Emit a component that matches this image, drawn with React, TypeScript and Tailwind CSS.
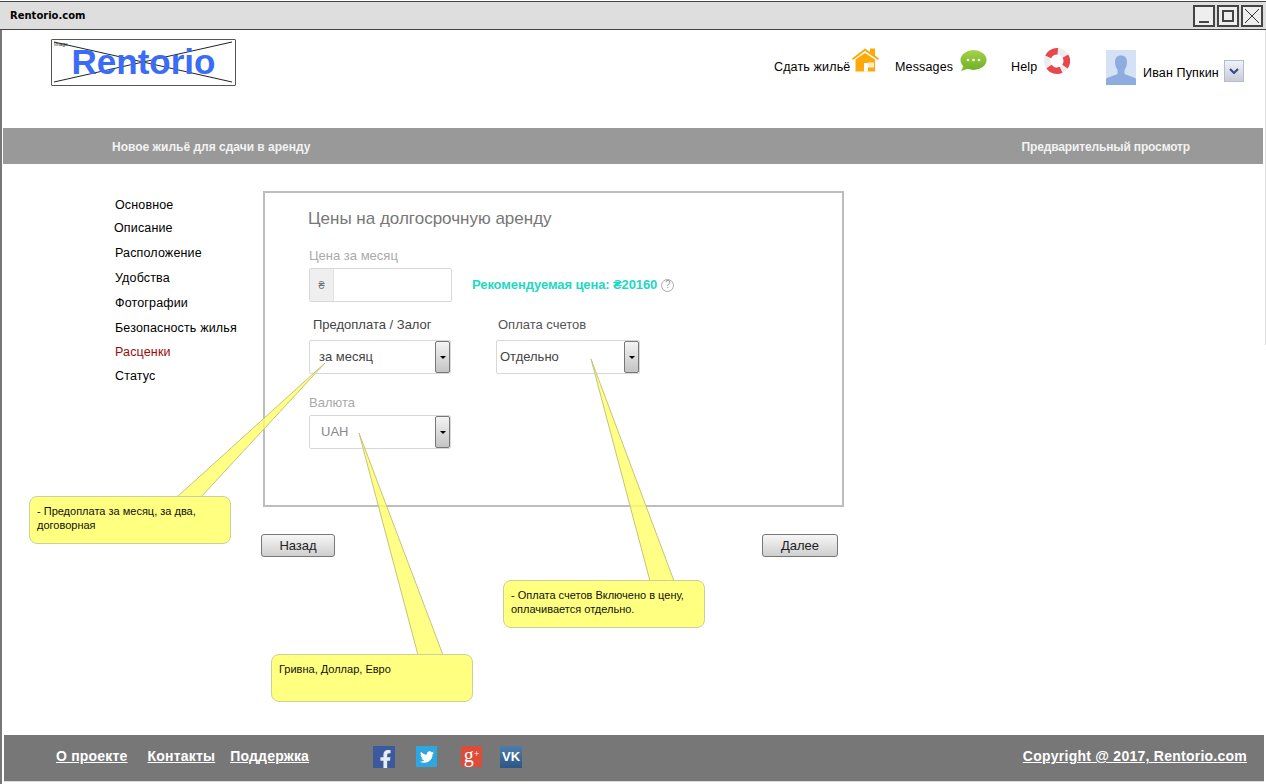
import { FaFacebookF, FaTwitter } from "react-icons/fa";

const navItems = ["Основное", "Описание", "Расположение", "Удобства", "Фотографии", "Безопасность жилья", "Расценки", "Статус"];
const navOffsets = ["mt-0", "mt-[9px]", "mt-[11px]", "mt-[11px]", "mt-[11px]", "mt-[11px]", "mt-[10px]", "mt-[10px]"];

function WindowButton({ children }: { children: React.ReactNode }) {
    return <div className="w-[22px] h-[22px] border-2 border-[#444] bg-[#eee] flex items-center justify-center">{children}</div>;
}

function HouseIcon() {
    return (
        <svg width="27" height="25" viewBox="0 0 27 25">
            <path d="M0 10.5 L13 0.5 L18 4 V0.5 H23 V7.5 L27 10.5 L26 12 L13 3 L1 12 Z" fill="#fda90a" />
            <path d="M3.5 11.5 L13 5 L23 11.5 V23.5 H3.5 Z" fill="#fda90a" />
            <rect x="12" y="15" width="4" height="8.5" fill="#fff" />
            <rect x="16" y="14.5" width="6" height="5" fill="#ffeec8" />
        </svg>
    );
}

function ChatIcon() {
    return (
        <svg width="27" height="22" viewBox="0 0 27 22">
            <defs>
                <linearGradient id="chat" x1="0" y1="0" x2="0" y2="1">
                    <stop offset="0" stopColor="#a4d34a" />
                    <stop offset="1" stopColor="#6fb024" />
                </linearGradient>
            </defs>
            <ellipse cx="13.5" cy="10" rx="13" ry="10" fill="url(#chat)" />
            <path d="M4 15 L1 21 L10 18 Z" fill="#7cb82c" />
            <circle cx="8" cy="10" r="1.3" fill="#fff" />
            <circle cx="13.5" cy="10" r="1.3" fill="#fff" />
            <circle cx="19" cy="10" r="1.3" fill="#fff" />
        </svg>
    );
}

function BuoyIcon() {
    return (
        <svg width="26" height="26" viewBox="0 0 26 26">
            <circle cx="13" cy="13" r="9.75" fill="none" stroke="#ececec" strokeWidth="6.5" />
            <path d="M4.2 8.9 A9.75 9.75 0 0 1 13.8 3.3" fill="none" stroke="#e8474c" strokeWidth="6.5" />
            <path d="M21.4 8.1 A9.75 9.75 0 0 1 21 18.6" fill="none" stroke="#e8474c" strokeWidth="6.5" />
            <path d="M17.1 21.8 A9.75 9.75 0 0 1 5 18.6" fill="none" stroke="#e8474c" strokeWidth="6.5" />
        </svg>
    );
}

function AvatarIcon() {
    return (
        <svg width="30" height="35" viewBox="0 0 30 35" className="block">
            <rect width="30" height="35" fill="#d5e2f5" />
            <path d="M15 5.5 C11 5.5 9 8 9 12 C9 15 10 18 11.5 20 V24 L1 28 L0 29 V35 H30 V29 L29 28 L18.5 24 V20 C20 18 21 15 21 12 C21 8 19 5.5 15 5.5 Z" fill="#8dade0" />
        </svg>
    );
}

function SelectBox({ value, wide, muted }: { value: string; wide?: boolean; muted?: boolean }) {
    return (
        <div className={`${wide ? "w-[144px]" : "w-[142px]"} h-[34px] flex bg-white border border-[#d8d8d8] rounded-[2px]`}>
            <div className={`flex-1 flex items-center text-[13px] ${wide ? "pl-[3px] text-[#444]" : muted ? "pl-[11px] text-[#888]" : "pl-[9px] text-[#444]"}`}>{value}</div>
            <div className="w-[15px] flex items-center justify-center bg-gradient-to-b from-[#f4f4f4] to-[#c4c4c4] border border-[#777] rounded-[2px]">
                <span className="w-0 h-0 border-x-[3px] border-x-transparent border-t-[3px] border-t-black"></span>
            </div>
        </div>
    );
}

function NavButton({ label, className }: { label: string; className: string }) {
    return (
        <div className={`h-[23px] flex items-center justify-center text-[13px] text-[#222] bg-gradient-to-b from-[#f6f6f6] to-[#cfcfcf] border border-[#777] rounded-[3px] ${className}`}>
            {label}
        </div>
    );
}

function Callout({ className, lines }: { className: string; lines: string[] }) {
    return (
        <div className={`absolute w-[202px] h-[48px] pl-[7px] pt-[7px] bg-[#ffff80] border border-[#cfcf9c] rounded-[8px] text-[11px] leading-[14px] text-[#111] ${className}`}>
            {lines.map((line) => (
                <div key={line}>{line}</div>
            ))}
        </div>
    );
}

export default function App() {
    return (
        <div className="relative w-[1266px] h-[784px] overflow-hidden bg-white flex flex-col font-['Liberation_Sans',Arial,sans-serif]">
            {/* window chrome */}
            <div className="h-[29px] mt-[1px] shrink-0 flex items-center justify-between bg-[#dedede] border-t border-b border-[#444] pl-[10px] pr-[3px]">
                <span className="text-[10px] font-['DejaVu_Sans',sans-serif] font-bold text-black">Rentorio.com</span>
                <div className="flex gap-[2px]">
                    <WindowButton><span className="w-[10px] h-[2px] bg-[#444] mt-[12px]"></span></WindowButton>
                    <WindowButton><span className="w-[12px] h-[12px] border-2 border-[#444]"></span></WindowButton>
                    <WindowButton>
                        <svg width="16" height="16" viewBox="0 0 16 16"><path d="M1 1 L15 15 M15 1 L1 15" stroke="#333" strokeWidth="1" /></svg>
                    </WindowButton>
                </div>
            </div>

            <div className="flex-1 flex flex-col border-l-2 border-[#777]">
                {/* header */}
                <div className="h-[98px] shrink-0 flex items-start text-[12.5px] tracking-[0.15px] text-black">
                    <div className="relative w-[185px] h-[47px] ml-[49px] mt-[9px] pb-[3px] border border-[#555] rounded-[1px] flex items-center justify-center">
                        <svg className="absolute inset-0" width="183" height="45" viewBox="0 0 183 45">
                            <path d="M2 42 L180 2 M2 2 L180 42" stroke="#222" strokeWidth="1" />
                        </svg>
                        <span className="absolute left-[2px] top-[1px] text-[5px] leading-[6px] tracking-normal text-[#222]">Image</span>
                        <span className="relative text-[35px] leading-none font-bold tracking-normal text-[#3b6cf5]">Rentorio</span>
                    </div>
                    <div className="ml-[538px] mt-[28px] w-[78px]">Сдать жильё</div>
                    <div className="mt-[18px]"><HouseIcon /></div>
                    <div className="ml-[16px] mt-[28px] w-[65px]">Messages</div>
                    <div className="mt-[20px]"><ChatIcon /></div>
                    <div className="ml-[24px] mt-[28px] w-[33px]">Help</div>
                    <div className="mt-[18px]"><BuoyIcon /></div>
                    <div className="ml-[36px] mt-[20px]"><AvatarIcon /></div>
                    <div className="ml-[7px] mt-[34px] w-[81px]">Иван Пупкин</div>
                    <div className="mt-[30px] w-[20px] h-[22px] flex items-center justify-center bg-gradient-to-b from-[#f0f2f8] to-[#c8ccd8] border border-[#b4bcd2]">
                        <svg width="10" height="6" viewBox="0 0 10 6"><path d="M1 1 L5 5 L9 1" fill="none" stroke="#2e4a86" strokeWidth="2" /></svg>
                    </div>
                </div>

                {/* title bar */}
                <div className="h-[36px] shrink-0 mr-[3px] ml-[1px] pt-[2px] bg-[#999] flex items-center justify-between pl-[109px] pr-[73px] text-[12px] font-bold text-[#f2f2f2]">
                    <span>Новое жильё для сдачи в аренду</span>
                    <span className="tracking-[-0.15px]">Предварительный просмотр</span>
                </div>

                {/* main */}
                <div className="flex-1 flex items-start text-[12px]">
                    <div className="w-[261px] pl-[113px] pt-[34px] text-[12.5px] tracking-[0.15px] text-black">
                        {navItems.map((item, i) => (
                            <div key={item} className={`leading-[14px] ${navOffsets[i]} ${item === "Расценки" ? "text-[#9b0a0a]" : ""} ${item === "Описание" ? "-ml-px" : ""}`}>
                                {item}
                            </div>
                        ))}
                    </div>
                    <div className="w-[581px] pt-[27px]">
                        <div className="h-[316px] border-2 border-[#bdbdbd] pl-[44px] pt-[16px]">
                            <div className="-ml-px text-[17px] leading-[19px] text-[#777]">Цены на долгосрочную аренду</div>
                            <div className="mt-[20px] text-[13px] leading-[15px] text-[#aaa]">Цена за месяц</div>
                            <div className="mt-[5px] flex items-center">
                                <div className="w-[143px] h-[34px] flex bg-white border border-[#d8d8d8] rounded-[2px]">
                                    <div className="w-[24px] flex items-center justify-center bg-[#eeefee] border-r border-[#e2e2e2] text-[11px] text-[#777]">₴</div>
                                </div>
                                <div className="ml-[20px] text-[13px] tracking-[-0.1px] font-bold text-[#1ed8c2]">Рекомендуемая цена: ₴20160</div>
                                <div className="ml-[4px] w-[13px] h-[13px] rounded-full border border-[#aaa] flex items-center justify-center text-[10px] leading-none text-[#999]">?</div>
                            </div>
                            <div className="mt-[15px] flex">
                                <div className="w-[187px]">
                                    <div className="ml-[4px] text-[13px] leading-[15px] text-[#444]">Предоплата / Залог</div>
                                    <div className="mt-[8px]"><SelectBox value="за месяц" /></div>
                                </div>
                                <div>
                                    <div className="ml-[2px] text-[13px] leading-[15px] text-[#555]">Оплата счетов</div>
                                    <div className="mt-[8px]"><SelectBox value="Отдельно" wide /></div>
                                </div>
                            </div>
                            <div className="mt-[21px] text-[13px] leading-[15px] text-[#aaa]">Валюта</div>
                            <div className="mt-[5px]"><SelectBox value="UAH" muted /></div>
                        </div>
                        <div className="mt-[27px] flex justify-between -ml-[2px] pr-[6px]">
                            <NavButton label="Назад" className="w-[74px]" />
                            <NavButton label="Далее" className="w-[76px]" />
                        </div>
                    </div>
                </div>

                {/* footer */}
                <div className="h-[47px] mb-[2px] mr-[2px] shrink-0 ml-[2px] pb-[3px] bg-[#777] border-b border-[#ddd] flex items-center text-[14px] font-bold tracking-[0.2px] text-white">
                    <a className="ml-[52px] underline">О проекте</a>
                    <a className="ml-[20px] underline">Контакты</a>
                    <a className="ml-[15px] underline">Поддержка</a>
                    <div className="ml-[64px] w-[22px] h-[22px] bg-[#3b5a9e] flex items-end justify-center overflow-hidden text-[#e8ecf5]"><FaFacebookF size={19} className="ml-[3px] -mb-[1px]" /></div>
                    <div className="ml-[21px] w-[21px] h-[21px] bg-[#2ea7e0] flex items-center justify-center"><FaTwitter size={14} /></div>
                    <div className="ml-[24px] w-[21px] h-[21px] bg-[#dd4b39] flex items-center justify-center font-normal font-['Liberation_Serif',serif] tracking-normal">
                        <span className="text-[20px] leading-[18px] -mt-[3px]">g</span>
                        <span className="text-[10px] leading-none -mt-[6px]">+</span>
                    </div>
                    <div className="ml-[18px] w-[22px] h-[22px] bg-gradient-to-b from-[#4d7dac] to-[#2c5685] flex items-center justify-center text-[13px] leading-none tracking-normal">VK</div>
                    <a className="ml-auto mr-[17px] tracking-[0.25px] underline">Copyright @ 2017, Rentorio.com</a>
                </div>
            </div>

            {/* notes lying over the form */}
            <div className="absolute right-0 top-[30px] w-px h-[315px] bg-[#ddd]"></div>
            <svg className="absolute inset-0 pointer-events-none" width="1266" height="784" viewBox="0 0 1266 784">
                <g fill="#ffff66" fillOpacity="0.8" stroke="#c4c47c" strokeWidth="1">
                    <path d="M325 363 L177 497 L201 497 Z" />
                    <path d="M359 433 L418 655 L443 655 Z" />
                    <path d="M591 359 L650 581 L674 581 Z" />
                </g>
            </svg>
            <Callout className="left-[29px] top-[496px]" lines={["- Предоплата за месяц, за два,", "договорная"]} />
            <Callout className="left-[271px] top-[654px]" lines={["Гривна, Доллар, Евро"]} />
            <Callout className="left-[503px] top-[580px]" lines={["- Оплата счетов Включено в цену,", "оплачивается отдельно."]} />
        </div>
    );
}
